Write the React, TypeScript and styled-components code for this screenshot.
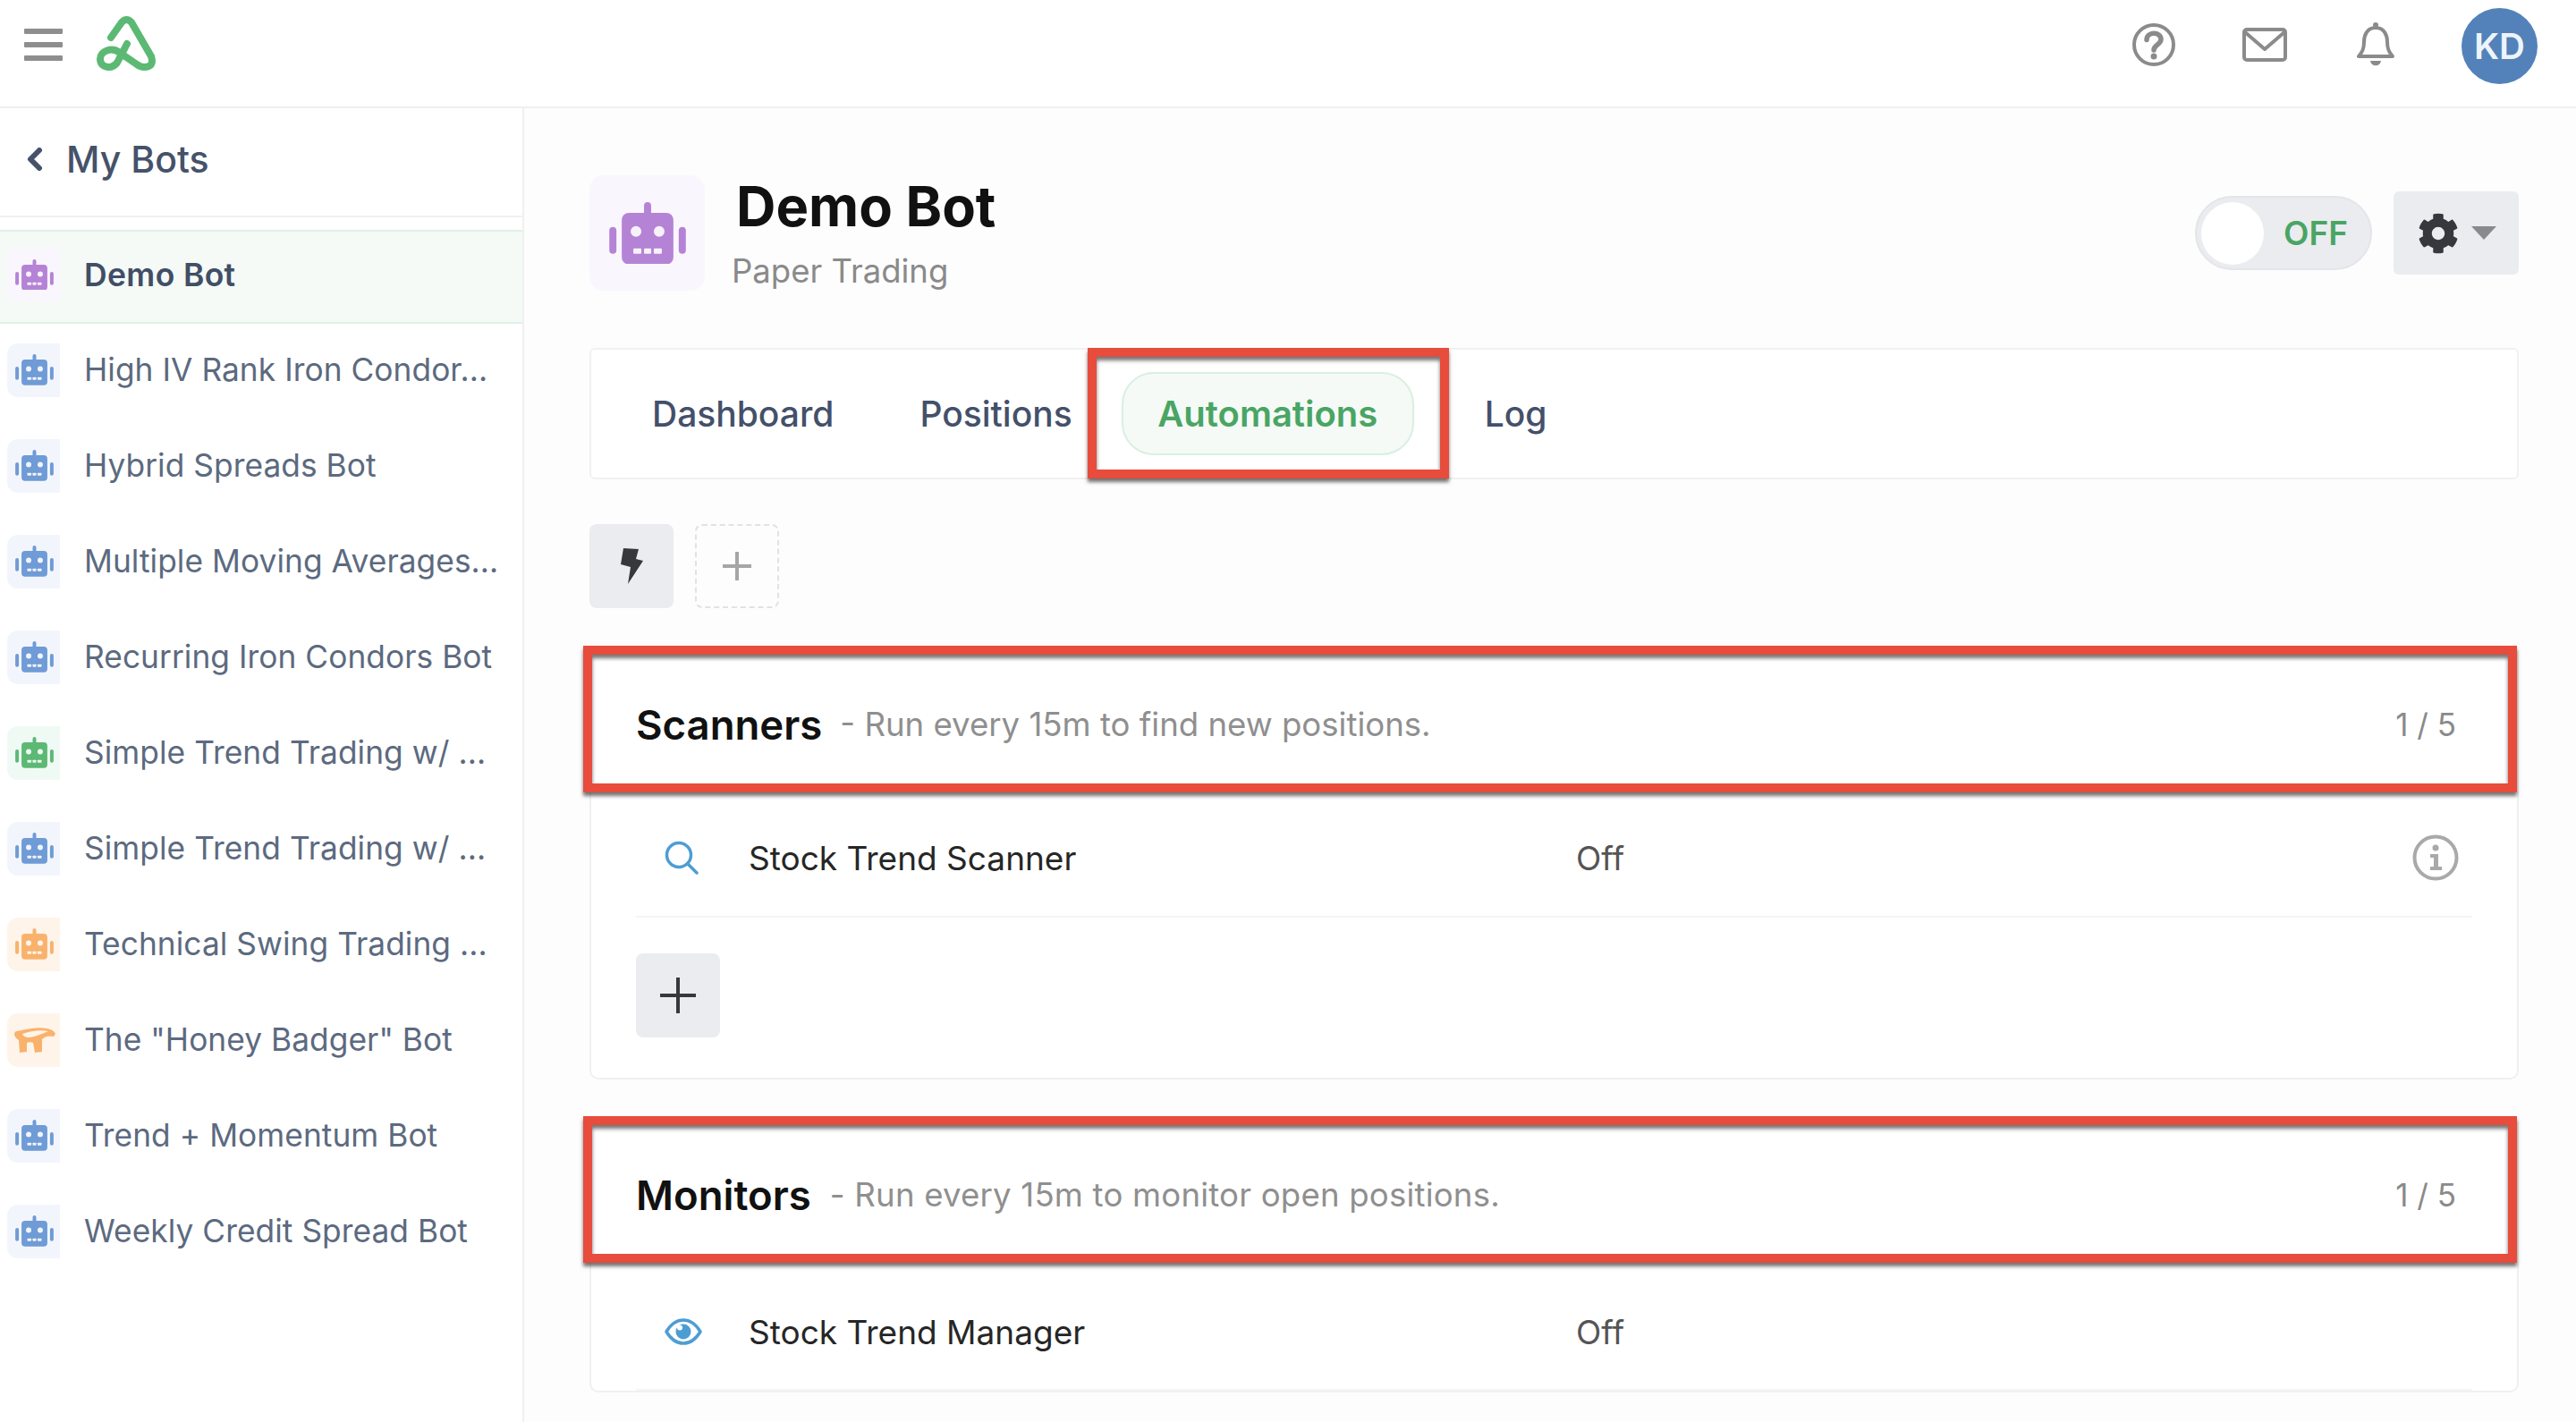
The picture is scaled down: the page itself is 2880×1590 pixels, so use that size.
import React from "react";
import styled, { createGlobalStyle } from "styled-components";
import { FaCog } from "react-icons/fa";

const Global = createGlobalStyle`
  html, body { margin: 0; padding: 0; background: #fff; }
  * { box-sizing: border-box; }
`;

const Page = styled.div`
  width: 2880px;
  height: 1590px;
  overflow: hidden;
  display: flex;
  flex-direction: column;
  background: #fff;
  font-family: Inter, "Noto Sans", sans-serif;
`;

const TopBar = styled.header`
  height: 121px;
  flex: none;
  display: flex;
  align-items: center;
  padding: 0 43px 19px 27px;
  background: #fff;
  border-bottom: 2px solid #efefef;
`;

const Burger = styled.div`
  width: 43px;
  height: 36px;
  display: flex;
  flex-direction: column;
  justify-content: space-between;
  margin-right: 37px;
  span { display: block; height: 6px; border-radius: 1px; background: #8e8e8e; }
`;

const Logo = styled.svg`
  width: 68px;
  height: 62px;
  display: block;
  margin-top: -3px;
`;

const TopActions = styled.div`
  margin-left: auto;
  display: flex;
  align-items: center;
`;

const IconSlot = styled.div`
  width: 124px;
  display: flex;
  justify-content: center;
  color: #8b8b8b;
`;

const Avatar = styled.div`
  width: 85px;
  height: 85px;
  margin-left: 34px;
  margin-top: 3px;
  border-radius: 50%;
  background: #5282b9;
  color: #eef4fb;
  font-size: 40px;
  font-weight: 600;
  display: flex;
  align-items: center;
  justify-content: center;
`;

const Body = styled.div`
  flex: 1;
  min-height: 0;
  display: flex;
`;

const Sidebar = styled.aside`
  width: 586px;
  flex: none;
  background: #fff;
  border-right: 2px solid #f0f0f0;
`;

const SideHead = styled.div`
  height: 122px;
  display: flex;
  align-items: center;
  padding: 0 0 7px 30px;
  gap: 26px;
  border-bottom: 2px solid #f1f1f1;
  margin-bottom: 14px;
  color: #465269;
  font-size: 41px;
  font-weight: 500;
`;

const BotRow = styled.div<{ $active?: boolean }>`
  height: ${(p) => (p.$active ? "105px" : "107px")};
  margin-bottom: ${(p) => (p.$active ? "-2px" : "0")};
  display: flex;
  align-items: center;
  padding-left: 8px;
  padding-bottom: ${(p) => (p.$active ? "5px" : "0")};
  gap: 27px;
  font-size: ${(p) => (p.$active ? "35.5px" : "35.3px")};
  letter-spacing: ${(p) => (p.$active ? "0.35px" : "0.05px")};
  white-space: nowrap;
  font-weight: ${(p) => (p.$active ? 600 : 400)};
  color: ${(p) => (p.$active ? "#414e66" : "#5c6a7f")};
  background: ${(p) => (p.$active ? "#f5faf7" : "transparent")};
  border-top: ${(p) => (p.$active ? "2px solid #dff1e7" : "none")};
  border-bottom: ${(p) => (p.$active ? "2px solid #dff1e7" : "none")};
`;

const SmallTile = styled.div<{ $bg: string; $fg: string }>`
  width: 59px;
  height: 60px;
  flex: none;
  border-radius: 12px 0 0 12px;
  background: ${(p) => p.$bg};
  color: ${(p) => p.$fg};
  display: flex;
  align-items: center;
  justify-content: center;
  padding-left: 2px;
`;

const Main = styled.main`
  flex: 1;
  min-width: 0;
  background: #fdfdfd;
  padding: 75px 64px 0 73px;
`;

const BotHead = styled.div`
  height: 129px;
  display: flex;
  align-items: flex-start;
`;

const BigTile = styled.div`
  width: 129px;
  height: 129px;
  flex: none;
  border-radius: 16px;
  background: #faf6fd;
  color: #b583d6;
  display: flex;
  align-items: center;
  justify-content: center;
`;

const BotTitles = styled.div`
  margin-left: 35px;
  display: flex;
  flex-direction: column;
`;

const BotName = styled.h1`
  margin: 0;
  font-size: 61.5px;
  line-height: 70px;
  font-weight: 700;
  color: #111;
`;

const BotSub = styled.div`
  margin-top: 15px;
  margin-left: -5px;
  font-size: 36.5px;
  line-height: 44px;
  color: #8a8a8a;
`;

const BotControls = styled.div`
  margin-left: auto;
  display: flex;
  align-items: center;
  margin-top: 18px;
  gap: 24px;
`;

const Toggle = styled.div`
  width: 198px;
  height: 83px;
  border-radius: 42px;
  background: #ebecf0;
  border: 2px solid #e4e5e9;
  display: flex;
  align-items: center;
  padding-left: 5px;
  gap: 22px;
`;

const Knob = styled.div`
  width: 70px;
  height: 70px;
  border-radius: 50%;
  background: #fff;
`;

const ToggleText = styled.span`
  color: #4aa564;
  font-size: 37px;
  font-weight: 600;
`;

const GearButton = styled.div`
  width: 140px;
  height: 93px;
  border-radius: 6px;
  background: #ebecf0;
  color: #36383d;
  display: flex;
  align-items: center;
  padding-left: 27px;
  gap: 14px;
`;

const Caret = styled.div`
  width: 0;
  height: 0;
  border-left: 14px solid transparent;
  border-right: 14px solid transparent;
  border-top: 15px solid #8a8a8e;
`;

const TabsBar = styled.nav`
  margin-top: 64px;
  height: 147px;
  border: 2px solid #f1f1f1;
  border-radius: 6px;
  background: #fff;
  display: flex;
  align-items: center;
  padding-left: 27px;
  gap: 14px;
`;

const Tab = styled.div<{ $active?: boolean }>`
  position: relative;
  height: 93px;
  padding: 0 ${(p) => (p.$active ? "38.5px" : "39px")};
  display: flex;
  align-items: center;
  border-radius: 36px;
  font-size: ${(p) => (p.$active ? "40px" : "39px")};
  white-space: nowrap;
  color: ${(p) => (p.$active ? "#4aa564" : "#44506a")};
  font-weight: ${(p) => (p.$active ? 600 : 500)};
  background: ${(p) => (p.$active ? "#f5faf7" : "transparent")};
  border: 2px solid ${(p) => (p.$active ? "#d9efe2" : "transparent")};
  margin-right: ${(p) => (p.$active ? "24px" : "0")};
`;

const Highlight = styled.div<{ $l: number; $r: number; $t: number; $b?: number; $h?: number }>`
  position: absolute;
  left: ${(p) => p.$l}px;
  right: ${(p) => p.$r}px;
  top: ${(p) => p.$t}px;
  ${(p) => (p.$h ? `height: ${p.$h}px;` : `bottom: ${p.$b}px;`)}
  border: 10px solid #e74c3c;
  box-shadow: 0 4px 4px rgba(0, 0, 0, 0.55), inset 0 4px 4px rgba(0, 0, 0, 0.55);
  pointer-events: none;
`;

const ToolRow = styled.div`
  margin-top: 50px;
  display: flex;
  gap: 24px;
`;

const IconButton = styled.div`
  width: 94px;
  height: 94px;
  border-radius: 8px;
  background: #ebecf0;
  color: #36383d;
  display: flex;
  align-items: center;
  justify-content: center;
`;

const DashedButton = styled.div`
  width: 94px;
  height: 94px;
  border-radius: 8px;
  border: 2px dashed #e2e2e4;
  color: #a6a6a6;
  display: flex;
  align-items: center;
  justify-content: center;
`;

const Card = styled.section<{ $first?: boolean }>`
  position: relative;
  margin-top: ${(p) => (p.$first ? "42px" : "41px")};
  background: #fff;
  border: 2px solid #f0f0f0;
  border-radius: 10px;
  padding-bottom: ${(p) => (p.$first ? "45px" : "0")};
`;

const CardHead = styled.div`
  height: 162px;
  display: flex;
  align-items: center;
  padding: 10px 68px 0 50px;
`;

const CardTitle = styled.h2`
  margin: 0;
  font-size: 45.5px;
  font-weight: 600;
  color: #111;
`;

const CardNote = styled.span<{ $gap: number; $track?: number }>`
  margin-left: ${(p) => p.$gap}px;
  font-size: 36.6px;
  letter-spacing: ${(p) => p.$track ?? 0}px;
  color: #8f8f8f;
  white-space: nowrap;
`;

const CardCount = styled.span`
  margin-left: auto;
  font-size: 35px;
  color: #8a8a8a;
`;

const Row = styled.div<{ $tall?: boolean }>`
  margin: 0 50px;
  height: ${(p) => (p.$tall ? "143px" : "140px")};
  display: grid;
  grid-template-columns: 94px 925px 1fr auto;
  align-items: center;
  border-bottom: 2px solid #f5f5f5;
  font-size: 37px;
  color: #262626;
  padding: ${(p) => (p.$tall ? "13px" : "8px")} 15px 0 32px;
`;

const RowStatus = styled.span`
  color: #555;
`;

const InfoMark = styled.div`
  color: #a9a9a9;
  display: flex;
`;

const AddButton = styled(IconButton)`
  margin: 40px 0 0 50px;
`;

const Robot = ({ w }: { w: number }) => (
  <svg width={w} height={w * 0.81} viewBox="0 0 86 70" fill="currentColor">
    <rect x="39" y="0" width="8" height="18" rx="4" />
    <rect x="14" y="12" width="58" height="58" rx="8" />
    <rect x="0" y="28" width="8" height="30" rx="4" />
    <rect x="78" y="28" width="8" height="30" rx="4" />
    <g fill="#fff" opacity="0.9">
      <circle cx="30" cy="33" r="6" />
      <circle cx="56" cy="33" r="6" />
      <rect x="27" y="52" width="9" height="6" rx="1" />
      <rect x="39" y="52" width="8" height="6" rx="1" />
      <rect x="50" y="52" width="9" height="6" rx="1" />
    </g>
  </svg>
);

const Badger = () => (
  <svg width="46" height="30" viewBox="0 0 46 30" fill="currentColor">
    <path
      fillRule="evenodd"
      d="M0 8 C1 4 4 5 8 4 C16 2 28 0 37 2 C41 3 45 5 46 8 L44 11 C40 10 35 10 31 14 L31 28 L23 29 L21 18 C19 17 16 17 14 18 L14 28 L6 29 L5 15 C2 13 0 11 0 8 Z M9 8 C10 11 13 12 17 12 C24 11 31 8 38 5 C28 3 18 5 9 8 Z"
    />
  </svg>
);

const bots = [
  { name: "High IV Rank Iron Condor...", c: "blue" },
  { name: "Hybrid Spreads Bot", c: "blue" },
  { name: "Multiple Moving Averages...", c: "blue" },
  { name: "Recurring Iron Condors Bot", c: "blue" },
  { name: "Simple Trend Trading w/ ...", c: "green" },
  { name: "Simple Trend Trading w/ ...", c: "blue" },
  { name: "Technical Swing Trading ...", c: "orange" },
  { name: 'The "Honey Badger" Bot', c: "badger" },
  { name: "Trend + Momentum Bot", c: "blue" },
  { name: "Weekly Credit Spread Bot", c: "blue" },
];

const palette: Record<string, [string, string]> = {
  purple: ["#faf6fd", "#b583d6"],
  blue: ["#f2f6fc", "#6f9bd6"],
  green: ["#f0faf5", "#5cb974"],
  orange: ["#fff4e9", "#f9b26c"],
  badger: ["#fff4e9", "#f9b26c"],
};

export default function App() {
  return (
    <Page>
      <Global />
      <TopBar>
        <Burger>
          <span />
          <span />
          <span />
        </Burger>
        <Logo viewBox="0 0 68 62" fill="none" stroke="#5cb974" strokeWidth="8" strokeLinecap="round" strokeLinejoin="round">
          <path d="M17 24 L29 7 Q34.5 1 40 7 L62 45 Q66 57 54 57 Q50 57 46 54 L27 41 C18 34 5 39 5 48 C5 58 18 60 24 52 L35 31" />
        </Logo>
        <TopActions>
          <IconSlot>
            <svg width="48" height="48" viewBox="0 0 48 48" fill="none" stroke="currentColor" strokeWidth="4" strokeLinecap="round">
              <circle cx="24" cy="24" r="22" />
              <path d="M16 18.5 C16 9 32 9 32 18 C32 24 24 24 24 30" strokeWidth="5.5" />
              <circle cx="24" cy="37" r="3.5" fill="currentColor" stroke="none" />
            </svg>
          </IconSlot>
          <IconSlot>
            <svg width="50" height="38" viewBox="0 0 50 38" fill="none" stroke="currentColor" strokeWidth="4" strokeLinejoin="round">
              <rect x="2" y="2" width="46" height="34" rx="3" />
              <path d="M3 5 L25 24 L47 5" />
            </svg>
          </IconSlot>
          <IconSlot>
            <svg width="42" height="50" viewBox="0 0 42 50" fill="none" stroke="currentColor" strokeWidth="4" strokeLinejoin="round">
              <path d="M21 6 C11 6 8 15 8 22 C8 31 5 34 2 38 L40 38 C37 34 34 31 34 22 C34 15 31 6 21 6 Z" />
              <circle cx="21" cy="3" r="3" fill="currentColor" stroke="none" />
              <path d="M15 43 L27 43 C26 50 16 50 15 43 Z" fill="currentColor" stroke="none" />
            </svg>
          </IconSlot>
          <Avatar>KD</Avatar>
        </TopActions>
      </TopBar>
      <Body>
        <Sidebar>
          <SideHead>
            <svg width="18" height="26" viewBox="0 0 18 26" fill="none" stroke="#465269" strokeWidth="6" strokeLinecap="round" strokeLinejoin="round">
              <path d="M14 3 L4 13 L14 23" />
            </svg>
            My Bots
          </SideHead>
          <BotRow $active>
            <SmallTile $bg={palette.purple[0]} $fg={palette.purple[1]}>
              <Robot w={43} />
            </SmallTile>
            Demo Bot
          </BotRow>
          {bots.map((b, i) => (
            <BotRow key={i}>
              <SmallTile $bg={palette[b.c][0]} $fg={palette[b.c][1]}>
                {b.c === "badger" ? <Badger /> : <Robot w={43} />}
              </SmallTile>
              {b.name}
            </BotRow>
          ))}
        </Sidebar>
        <Main>
          <BotHead>
            <BigTile>
              <Robot w={86} />
            </BigTile>
            <BotTitles>
              <BotName>Demo Bot</BotName>
              <BotSub>Paper Trading</BotSub>
            </BotTitles>
            <BotControls>
              <Toggle>
                <Knob />
                <ToggleText>OFF</ToggleText>
              </Toggle>
              <GearButton>
                <FaCog size={46} />
                <Caret />
              </GearButton>
            </BotControls>
          </BotHead>
          <TabsBar>
            <Tab>Dashboard</Tab>
            <Tab>Positions</Tab>
            <Tab $active>
              Automations
              <Highlight $l={-40} $r={-41} $t={-29} $b={-28} />
            </Tab>
            <Tab>Log</Tab>
          </TabsBar>
          <ToolRow>
            <IconButton>
              <svg width="26" height="40" viewBox="0 0 26 40" fill="currentColor">
                <path d="M4 0 L21 1 L18 12 L26 14 L9 40 L12 21 L1 18 Z" />
              </svg>
            </IconButton>
            <DashedButton>
              <svg width="32" height="32" viewBox="0 0 32 32" stroke="currentColor" strokeWidth="4">
                <path d="M16 0 V32 M0 16 H32" />
              </svg>
            </DashedButton>
          </ToolRow>
          <Card $first>
            <Highlight $l={-9} $r={0} $t={-2} $h={164} />
            <CardHead>
              <CardTitle>Scanners</CardTitle>
              <CardNote $gap={20}>- Run every 15m to find new positions.</CardNote>
              <CardCount>1 / 5</CardCount>
            </CardHead>
            <Row>
              <svg width="38" height="38" viewBox="0 0 38 38" fill="none" stroke="#4d9dd3" strokeWidth="3.5" strokeLinecap="round">
                <circle cx="16" cy="16" r="13.5" />
                <path d="M26 26 L36 36" />
              </svg>
              <span>Stock Trend Scanner</span>
              <RowStatus>Off</RowStatus>
              <InfoMark>
                <svg width="52" height="52" viewBox="0 0 52 52" fill="none" stroke="currentColor" strokeWidth="4">
                  <circle cx="26" cy="26" r="23.5" />
                  <circle cx="26" cy="15" r="3.5" fill="currentColor" stroke="none" />
                  <path d="M20 22 H29 V36 H33 V40 H20 V36 H24 V26 H20 Z" fill="currentColor" stroke="none" />
                </svg>
              </InfoMark>
            </Row>
            <AddButton>
              <svg width="40" height="40" viewBox="0 0 40 40" stroke="currentColor" strokeWidth="4">
                <path d="M20 0 V40 M0 20 H40" />
              </svg>
            </AddButton>
          </Card>
          <Card>
            <Highlight $l={-9} $r={0} $t={-2} $h={164} />
            <CardHead>
              <CardTitle>Monitors</CardTitle>
              <CardNote $gap={21} $track={0.2}>- Run every 15m to monitor open positions.</CardNote>
              <CardCount>1 / 5</CardCount>
            </CardHead>
            <Row $tall>
              <svg width="42" height="30" viewBox="0 0 42 30" fill="none" stroke="#4d9dd3" strokeWidth="3.5" strokeLinejoin="round">
                <path d="M2 15 C8 5 14 2 21 2 C28 2 34 5 40 15 C34 25 28 28 21 28 C14 28 8 25 2 15 Z" />
                <circle cx="21" cy="15" r="8.5" fill="#4d9dd3" stroke="none" />
                <circle cx="17" cy="10.5" r="3" fill="#fff" stroke="none" />
              </svg>
              <span>Stock Trend Manager</span>
              <RowStatus>Off</RowStatus>
              <span />
            </Row>
          </Card>
        </Main>
      </Body>
    </Page>
  );
}
